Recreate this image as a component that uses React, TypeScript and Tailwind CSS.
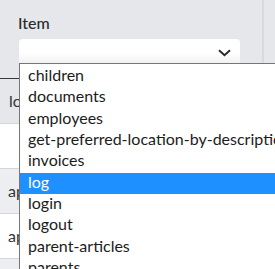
import React from "react";

const items = [
  "children",
  "documents",
  "employees",
  "get-preferred-location-by-description",
  "invoices",
  "log",
  "login",
  "logout",
  "parent-articles",
  "parents",
  "payments",
];

export default function App() {
  return (
    <div
      className="relative w-[275px] h-[269px] overflow-hidden bg-[#e5e7eb] text-[16px]"
      style={{ fontFamily: "Lato, 'Open Sans', sans-serif" }}
    >
      <div className="flex h-[78px]">
        <div className="w-[262px] pl-[19px] pt-[11px]">
          <div className="leading-[24px] font-medium text-[#2a2a2a] -ml-[1px]">Item</div>
          <div className="mt-[4px] w-[221px] h-[28px] rounded-[4px] bg-gradient-to-b from-white via-white to-[#ececec] flex items-start justify-end pr-[9px] pt-[10px]">
            <svg width="13" height="8" viewBox="0 0 13 8" fill="none">
              <path d="M1 1.2 L6.5 6.2 L12 1.2" stroke="#2b2b2b" strokeWidth="2" />
            </svg>
          </div>
        </div>
        <div className="w-[2px] bg-[#d8dadf]" />
        <div className="flex-1" />
      </div>
      <div className="border-t border-[#3a3a3a] text-[#333]">
        <div className="h-[45px] bg-[#e5e7eb] border-b border-[#d4d6db] flex items-center pl-[9px]">location</div>
        <div className="h-[45px] bg-white border-b border-[#d4d6db] flex items-center pl-[9px]"></div>
        <div className="h-[45px] bg-[#eceef1] border-b border-[#d4d6db] flex items-center pl-[8px]">api</div>
        <div className="h-[45px] bg-white border-b border-[#d4d6db] flex items-center pl-[8px]">api</div>
        <div className="h-[45px] bg-[#eceef1]" />
      </div>
      <div className="absolute left-[19px] top-[63px] w-[300px] bg-white border border-[#767676] pt-[2px]">
        {items.map((it) => (
          <div
            key={it}
            className={
              "h-[21.33px] pl-[8px] leading-[18px] whitespace-nowrap " +
              (it === "log" ? "bg-[#1e90ff] text-white" : "text-[#1c1c1c]")
            }
          >
            {it}
          </div>
        ))}
      </div>
    </div>
  );
}
